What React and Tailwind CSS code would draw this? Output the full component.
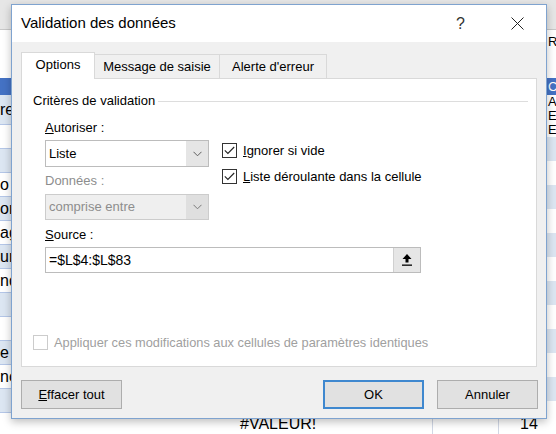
import React from 'react'

const leftRows = [
  { h: 48, bg: 'bg-white', t: '', border: false },
  { h: 17, bg: 'bg-[#4472c4]', t: '', border: false },
  { h: 30, bg: 'bg-[#dce6f2]', t: 're' },
  { h: 24, bg: 'bg-white', t: '' },
  { h: 24, bg: 'bg-[#dce6f2]', t: '' },
  { h: 24, bg: 'bg-white', t: 'o' },
  { h: 24, bg: 'bg-[#dce6f2]', t: 'or' },
  { h: 24, bg: 'bg-white', t: 'ag' },
  { h: 24, bg: 'bg-[#dce6f2]', t: 'ur' },
  { h: 24, bg: 'bg-white', t: 'nd' },
  { h: 24, bg: 'bg-[#dce6f2]', t: '' },
  { h: 24, bg: 'bg-white', t: '' },
  { h: 24, bg: 'bg-[#dce6f2]', t: 'e' },
  { h: 24, bg: 'bg-white', t: 'nc' },
  { h: 24, bg: 'bg-[#dce6f2]', t: '' },
]

const rightRows = [
  { h: 24, bg: 'bg-white', t: 'Re' },
  { h: 24, bg: 'bg-white', t: '' },
  { h: 17, bg: 'bg-[#4472c4] text-white', t: 'C' },
  { h: 14, bg: 'bg-white', t: 'A' },
  { h: 14, bg: 'bg-white', t: 'E' },
  { h: 14, bg: 'bg-white', t: 'E' },
  { h: 24, bg: 'bg-[#dce6f2]', t: '' },
  { h: 24, bg: 'bg-white', t: '' },
  { h: 24, bg: 'bg-[#dce6f2]', t: '' },
  { h: 24, bg: 'bg-white', t: '' },
  { h: 24, bg: 'bg-[#dce6f2]', t: '' },
  { h: 24, bg: 'bg-white', t: '' },
  { h: 24, bg: 'bg-[#dce6f2]', t: '' },
  { h: 24, bg: 'bg-white', t: '' },
  { h: 24, bg: 'bg-[#dce6f2]', t: '' },
  { h: 24, bg: 'bg-white', t: '' },
  { h: 24, bg: 'bg-[#dce6f2]', t: '' },
]

function Chevron({ color = '#5f5f5f' }) {
  return (
    <svg width="9" height="6" viewBox="0 0 9 6">
      <path d="M0.5 0.8 L4.5 4.8 L8.5 0.8" fill="none" stroke={color} strokeWidth="1" />
    </svg>
  )
}

function Box({ checked, disabled }) {
  return (
    <span className={`w-[15px] h-[15px] shrink-0 border bg-white flex items-center justify-center ${disabled ? 'border-[#cccccc]' : 'border-[#333333]'}`}>
      {checked && (
        <svg width="11" height="9" viewBox="0 0 11 9">
          <path d="M0.8 4.3 L3.9 7.4 L10.2 1" fill="none" stroke="#222" strokeWidth="1.1" />
        </svg>
      )}
    </span>
  )
}

function Button({ children, primary }) {
  return (
    <button className={`w-[101px] h-[29px] bg-[#e1e1e1] text-[13px] text-black ${primary ? 'border-2 border-[#3f88cf]' : 'border border-[#adadad]'}`}>
      {children}
    </button>
  )
}

export default function App() {
  return (
    <div className="relative w-[556px] h-[434px] overflow-hidden bg-white font-['Liberation_Sans',Arial,sans-serif] text-black">
      {/* spreadsheet behind the dialog */}
      <div className="flex flex-col w-full h-full">
        <div className="h-[30px] shrink-0 bg-[#e6e6e6] border-b border-[#c8c8c8]" />
        <div className="flex flex-1 min-h-0">
          <div className="w-[11px] flex flex-col overflow-hidden">
            {leftRows.map((r, i) => (
              <div key={i} style={{ height: r.h }} className={`shrink-0 flex items-center text-[16px] whitespace-nowrap ${r.bg} ${r.border === false ? '' : 'border-b border-[#b4c6e7]'}`}>
                {r.t}
              </div>
            ))}
          </div>
          <div className="flex-1" />
          <div className="w-[9px] flex flex-col overflow-hidden">
            {rightRows.map((r, i) => (
              <div key={i} style={{ height: r.h }} className={`shrink-0 flex items-center pl-[1px] text-[13px] leading-[14px] whitespace-nowrap ${r.bg}`}>
                {r.t}
              </div>
            ))}
          </div>
        </div>
        <div className="h-[21px] shrink-0 flex text-[16px] leading-[18px]">
          <div className="w-[432px] pl-[240px] pt-[2px]">#VALEUR!</div>
          <div className="w-[66px] border-l border-[#d0d7e5]" />
          <div className="flex-1 border-l border-[#d0d7e5] pl-[21px] pt-[2px]">14</div>
        </div>
      </div>

      {/* dialog window */}
      <div className="absolute left-[11px] top-[4px] w-[536px] h-[415px] flex flex-col bg-[#f0f0f0] border border-[#7fa3cf] shadow-[0_3px_8px_rgba(0,0,0,0.25)]">
        <div className="h-[37px] shrink-0 bg-white flex items-center pl-[9px]">
          <span className="text-[15px]">Validation des données</span>
          <span className="ml-auto mr-[46px] text-[16px] text-[#333]">?</span>
          <svg className="mr-[22px]" width="13" height="13" viewBox="0 0 13 13">
            <path d="M0.5 0.5 L12.5 12.5 M12.5 0.5 L0.5 12.5" stroke="#222" strokeWidth="1" />
          </svg>
        </div>

        <div className="flex-1 flex flex-col px-[9px] pt-[10px] pb-[9px] text-[13px]">
          {/* tabs */}
          <div className="h-[26px] flex items-end">
            <div className="w-[74px] h-[27px] -mb-px relative z-10 bg-white border border-b-0 border-[#d9d9d9] flex items-center justify-center pb-[2px]">Options</div>
            <div className="w-[125px] h-[24px] bg-[#f0f0f0] border border-l-0 border-b-0 border-[#d9d9d9] flex items-center justify-center">Message de saisie</div>
            <div className="w-[107px] h-[24px] bg-[#f0f0f0] border border-l-0 border-b-0 border-[#d9d9d9] flex items-center justify-center">Alerte d'erreur</div>
          </div>

          {/* panel */}
          <div className="h-[289px] shrink-0 bg-white border border-[#d9d9d9] pl-[11px] pr-[8px] pt-[13px] pb-[14px] flex flex-col">
            <div className="h-[18px] flex items-center gap-[3px]">
              <span>Critères de validation</span>
              <div className="flex-1 h-px bg-[#dddddd]" />
            </div>

            <div className="pl-[12px] flex">
              <div className="w-[164px] flex flex-col">
                <div className="mt-[9px] h-[18px] leading-[18px]"><u>A</u>utoriser :</div>
                <div className="mt-[3px] h-[27px] border border-[#bcbcbc] bg-white flex">
                  <span className="flex-1 pl-[3px] leading-[25px]">Liste</span>
                  <span className="w-[22px] bg-[#e5e5e5] flex items-center justify-center"><Chevron /></span>
                </div>
                <div className="mt-[5px] h-[18px] leading-[18px] text-[#8d8d8d]">Données :</div>
                <div className="mt-[4px] h-[26px] border border-[#cccccc] bg-[#efefef] flex">
                  <span className="flex-1 pl-[3px] leading-[24px] text-[#8d8d8d]">comprise entre</span>
                  <span className="w-[22px] bg-[#dfdfdf] flex items-center justify-center"><Chevron color="#7a7a7a" /></span>
                </div>
              </div>
              <div className="ml-[13px] pt-[32px] flex flex-col gap-[9px] leading-[17px]">
                <div className="h-[17px] flex items-center gap-[6px]">
                  <Box checked />
                  <span><u>I</u>gnorer si vide</span>
                </div>
                <div className="h-[17px] flex items-center gap-[6px]">
                  <Box checked />
                  <span><u>L</u>iste déroulante dans la cellule</span>
                </div>
              </div>
            </div>

            <div className="pl-[12px] flex flex-col">
              <div className="mt-[6px] h-[18px] leading-[18px]"><u>S</u>ource :</div>
              <div className="mt-[3px] w-[376px] h-[26px] border border-[#bcbcbc] bg-white flex">
                <span className="flex-1 pl-[3px] leading-[24px] text-[14px]">=$L$4:$L$83</span>
                <span className="w-[27px] bg-[#e6e6e6] border-l border-[#d0d0d0] flex items-center justify-center">
                  <svg width="10" height="12" viewBox="0 0 10 12">
                    <polygon points="5,0 9.5,5 6.5,5 6.5,8.5 3.5,8.5 3.5,5 0.5,5" fill="#000" />
                    <rect x="0" y="10.5" width="10" height="1.3" fill="#000" />
                  </svg>
                </span>
              </div>
            </div>

            <div className="mt-auto flex items-center gap-[6px] text-[#a0a0a0] text-[12.8px]">
              <Box disabled />
              <span>Appliquer ces modifications aux cellules de paramètres identiques</span>
            </div>
          </div>

          {/* buttons */}
          <div className="mt-auto flex items-center">
            <Button><u>E</u>ffacer tout</Button>
            <div className="ml-auto flex gap-[13px] mr-[-1px]">
              <Button primary>OK</Button>
              <Button>Annuler</Button>
            </div>
          </div>
        </div>
      </div>
    </div>
  )
}
